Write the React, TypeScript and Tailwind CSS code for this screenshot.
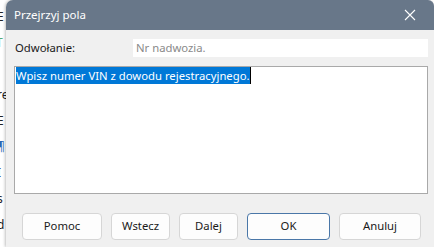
import React from "react";

const font = { fontFamily: '"Noto Sans", "Open Sans", sans-serif' };

function Btn({ label, w, primary }: { label: string; w: string; primary?: boolean }) {
  return (
    <button
      type="button"
      className={`${w} h-[27px] rounded-[4px] bg-[#fdfdfd] text-[11.3px] text-[#1a1a1a] ${
        primary ? "border border-[#4a77a8]" : "border border-[#d6d6d6]"
      }`}
    >
      {label}
    </button>
  );
}

export default function App() {
  return (
    <div className="flex h-[247px] w-[434px] overflow-hidden bg-white" style={font}>
      {/* document behind the dialog */}
      <div className="flex w-[6px] shrink-0 flex-col gap-[12px] overflow-hidden pt-[10px] text-[12px] leading-[14px] text-[#222]">
        <span className="-ml-[3px]">E</span>
        <span className="-ml-[4px] text-[#5a7]">T</span>
        <span className="-ml-[4px]">:</span>
        <span className="-ml-[3px]">re</span>
        <span className="-ml-[3px]">E</span>
        <span className="-ml-[3px] text-[#2a64b0]">¶</span>
        <span className="-ml-[3px] text-[#1a2a6a]">I</span>
        <span className="-ml-[3px]">s</span>
        <span className="-ml-[3px]">d</span>
      </div>

      {/* dialog */}
      <div className="flex flex-1 flex-col overflow-hidden rounded-tl-[7px] rounded-tr-[6px] bg-[#f0f0f0] shadow-[-1px_0_3px_rgba(0,0,0,0.25)]">
        <div className="flex h-[30px] shrink-0 items-center justify-between bg-[#687789] pl-[8px] pr-[18px]">
          <span className="text-[11.5px] text-white">Przejrzyj pola</span>
          <svg width="12" height="12" viewBox="0 0 12 12" stroke="white" strokeWidth="1.1">
            <path d="M1 1 L11 11 M11 1 L1 11" />
          </svg>
        </div>

        <div className="flex flex-col pl-[8px] pr-[6px] pt-[9px]">
          <div className="flex h-[18px] items-center">
            <span className="w-[119px] pl-[1px] text-[11.3px] text-[#1a1a1a]">Odwołanie:</span>
            <div className="flex h-[18px] flex-1 items-center bg-white px-[3px] text-[11.3px] text-[#8a8a8a]">
              Nr nadwozia.
            </div>
          </div>

          <div className="mt-[9px] h-[128px] border border-[#a9a9a9] bg-white px-[1px]">
            <div className="flex items-start">
              <span className="block bg-[#0078d7] text-[11.3px] leading-[17px] text-white">
                Wpisz numer VIN z dowodu rejestracyjnego.
              </span>
              <span className="block h-[17px] w-[1px] bg-black" />
            </div>
          </div>

          <div className="mt-[19px] flex gap-[9px] pl-[8px]">
            <Btn label="Pomoc" w="w-[80px]" />
            <Btn label="Wstecz" w="w-[59px]" />
            <Btn label="Dalej" w="w-[59px]" />
            <Btn label="OK" w="w-[83px]" primary />
            <Btn label="Anuluj" w="w-[82px]" />
          </div>
        </div>
      </div>
    </div>
  );
}
